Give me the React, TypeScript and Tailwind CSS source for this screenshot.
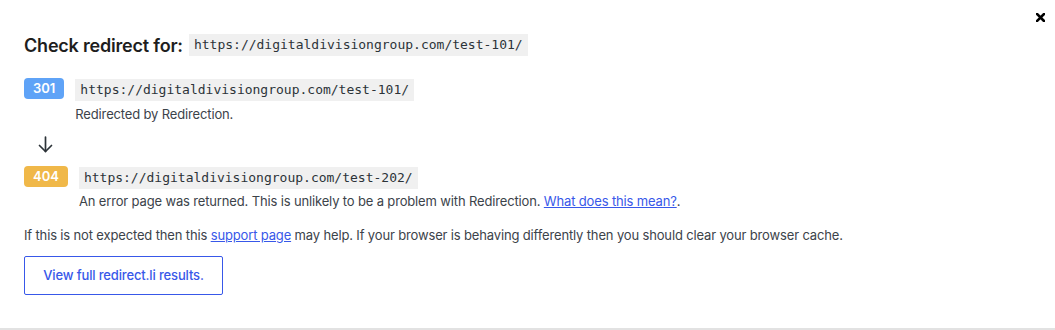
import React from 'react';

const mono = "font-['DejaVu_Sans_Mono',monospace]";

const Url: React.FC<{ children: React.ReactNode }> = ({ children }) => (
  <code className={`${mono} inline-block bg-[#f0f0f0] px-[5px] text-[13px] leading-[22px] text-[#2c3338]`}>
    {children}
  </code>
);

const Badge: React.FC<{ code: string; color: string }> = ({ code, color }) => (
  <span
    className={`mt-[2px] inline-flex h-[21px] shrink-0 items-center rounded-[4px] px-[9px] text-[13px] font-semibold text-white ${color}`}
  >
    {code}
  </span>
);

export default function App() {
  return (
    <div className="relative h-[330px] w-full border-b-2 border-[#e2e2e2] bg-white font-['Inter',sans-serif] text-[#3c434a]">
      {/* close */}
      <button className="absolute right-[10px] top-[13px] text-[#000]" aria-label="Close">
        <svg width="9" height="9" viewBox="0 0 9 9">
          <path d="M1 1 L8 8 M8 1 L1 8" stroke="currentColor" strokeWidth="2.6" strokeLinecap="square" />
        </svg>
      </button>

      <div className="px-6 pt-[34px]">
        {/* heading */}
        <div className="flex items-center gap-[6px]">
          <h1 className="text-[18px] font-semibold leading-[21px] tracking-[-0.2px] text-[#1e1e1e]">
            Check redirect for:
          </h1>
          <Url>https://digitaldivisiongroup.com/test-101/</Url>
        </div>

        {/* step 1 */}
        <div className="mt-[20px] flex items-start">
          <Badge code="301" color="bg-[#5fa3f7]" />
          <div className="ml-[11px]">
            <Url>https://digitaldivisiongroup.com/test-101/</Url>
            <p className="mt-[3px] text-[13px] leading-[20px] tracking-[-0.15px]">Redirected by Redirection.</p>
          </div>
        </div>

        {/* arrow */}
        <div className="mt-[12px] flex h-[18px] w-[42px] justify-center">
          <svg width="15" height="17" viewBox="0 0 15 17" fill="none" stroke="#2c3338" strokeWidth="1.7" strokeLinecap="round" strokeLinejoin="round">
            <path d="M7.5 1 V15.5" />
            <path d="M1.5 9.5 L7.5 15.5 L13.5 9.5" />
          </svg>
        </div>

        {/* step 2 */}
        <div className="mt-[10px] flex items-start">
          <Badge code="404" color="bg-[#f0b849]" />
          <div className="ml-[11px]">
            <Url>https://digitaldivisiongroup.com/test-202/</Url>
            <p className="mt-[2px] text-[13px] leading-[20px] tracking-[-0.15px]">
              An error page was returned. This is unlikely to be a problem with Redirection.{' '}
              <a href="#" className="text-[#3858e9] underline">
                What does this mean?
              </a>
              .
            </p>
          </div>
        </div>

        <p className="mt-[14px] text-[13px] leading-[20px] tracking-[-0.15px]">
          If this is not expected then this{' '}
          <a href="#" className="text-[#3858e9] underline">
            support page
          </a>{' '}
          may help. If your browser is behaving differently then you should clear your browser cache.
        </p>

        <button className="mt-[11px] h-[39px] w-[199px] rounded-[2px] border border-[#3858e9] text-[13px] font-medium tracking-[-0.15px] text-[#3858e9]">
          View full redirect.li results.
        </button>
      </div>
    </div>
  );
}
